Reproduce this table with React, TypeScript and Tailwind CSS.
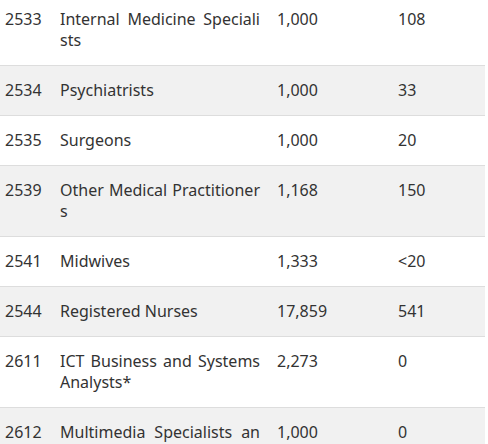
const rows: [string, string, string, string][] = [
  ['2533', 'Internal Medicine Specialists', '1,000', '108'],
  ['2534', 'Psychiatrists', '1,000', '33'],
  ['2535', 'Surgeons', '1,000', '20'],
  ['2539', 'Other Medical Practitioners', '1,168', '150'],
  ['2541', 'Midwives', '1,333', '<20'],
  ['2544', 'Registered Nurses', '17,859', '541'],
  ['2611', 'ICT Business and Systems Analysts*', '2,273', '0'],
  ['2612', 'Multimedia Specialists and Web Developers', '1,000', '0'],
];

export default function App() {
  return (
    <div className="h-[444px] w-[488px] overflow-hidden bg-white">
      <table
        className="-mt-[5px] w-[485px] table-fixed border-collapse text-[16px] leading-[21px] text-[#333]"
        style={{ fontFamily: '"Noto Sans", "Open Sans", sans-serif' }}
      >
        <colgroup>
          <col className="w-[55px]" />
          <col className="w-[217px]" />
          <col className="w-[121px]" />
          <col />
        </colgroup>
        <tbody>
          {rows.map((r, i) => (
            <tr key={r[0]} className={`border-b border-[#ddd] ${i % 2 === 1 ? 'bg-[#f1f1f1]' : 'bg-white'}`}>
              <td className="px-[5px] py-[14px] align-top">{r[0]}</td>
              <td className="py-[14px] pl-[5px] pr-[12px] align-top text-justify break-all">{r[1]}</td>
              <td className="px-[5px] py-[14px] align-top">{r[2]}</td>
              <td className="px-[5px] py-[14px] align-top">{r[3]}</td>
            </tr>
          ))}
        </tbody>
      </table>
    </div>
  );
}
